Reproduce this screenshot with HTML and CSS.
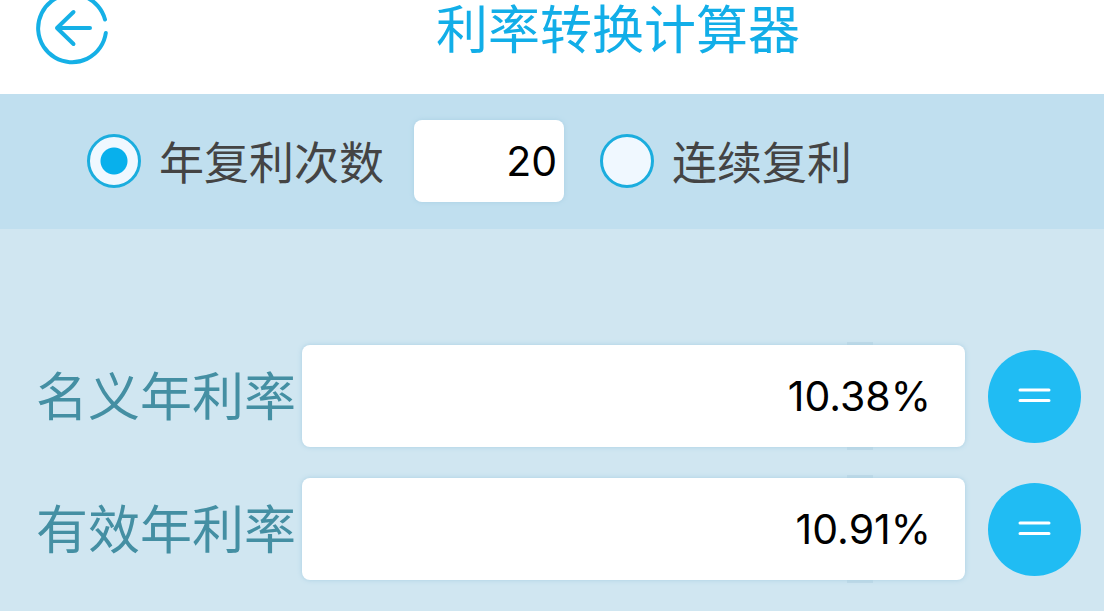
FILE: index.html
```html
<!DOCTYPE html>
<html lang="zh-CN">
<head>
	<meta charset="UTF-8">
	<meta name="viewport" content="width=device-width, initial-scale=1">
	<title>利率转换计算器</title>
	<link rel="stylesheet" href="styles.css">
</head>
<body>

	<header class="header">
		<button type="button" class="back" aria-label="返回">
			<svg width="76" height="66" viewBox="0 10 76 66" fill="none" stroke="#15b0e6" stroke-width="4" stroke-linecap="round" stroke-linejoin="round">
				<path d="M71 29.500A34 34 0 1 0 71.800 43"/>
				<path d="M56 38H23M39.500 22L23 38L39.500 54"/>
			</svg>
		</button>
		<h1 class="title">利率转换计算器</h1>
	</header>

	<form>
		<div class="options">
			<label class="option">
				<input type="radio" name="mode" class="radio" checked>
				<span>年复利次数</span>
			</label>
			<input type="text" class="box times" value="20" aria-label="年复利次数">
			<label class="option">
				<input type="radio" name="mode" class="radio">
				<span>连续复利</span>
			</label>
		</div>

		<div class="rates">
			<div class="row">
				<label for="nominal" class="name">名义年利率</label>
				<div class="field">
					<input type="text" id="nominal" class="box rate" value="10.38%">
				</div>
				<button type="button" class="equal" aria-label="计算名义年利率">
					<svg width="34" height="18" viewBox="0 0 34 18" stroke="#fff" stroke-width="3" stroke-linecap="round">
						<path d="M2 3H31M2 13.500H31"/>
					</svg>
				</button>
			</div>
			<div class="row">
				<label for="effective" class="name">有效年利率</label>
				<div class="field">
					<input type="text" id="effective" class="box rate" value="10.91%">
				</div>
				<button type="button" class="equal" aria-label="计算有效年利率">
					<svg width="34" height="18" viewBox="0 0 34 18" stroke="#fff" stroke-width="3" stroke-linecap="round">
						<path d="M2 3H31M2 13.500H31"/>
					</svg>
				</button>
			</div>
		</div>
	</form>

</body>
</html>
```
FILE: styles.css
```css
*{
	margin: 0;
	padding: 0;
	box-sizing: border-box;
}
body{
	min-height: 100vh;
	background: #d0e6f1;
	font-family: "Noto Sans CJK SC", sans-serif;
}
button{
	border: none;
	background: none;
	cursor: pointer;
}
svg{
	display: block;
}
.header{
	display: flex;
	align-items: flex-start;
	gap: 22px;
	padding: 0 0 28px 34px;
	background: #fff;
}
.title{
	flex: 1;
	font-size: 52px;
	font-weight: 400;
	line-height: 54px;
	text-align: center;
	color: #12aee8;
}
.options{
	display: flex;
	align-items: center;
	padding: 26px 24px 27px 87px;
	background: #c0dfef;
}
.option{
	display: flex;
	align-items: center;
	gap: 18px;
	font-size: 45px;
	line-height: 54px;
	white-space: nowrap;
	color: #444;
}
.radio{
	appearance: none;
	width: 54px;
	height: 54px;
	border: 3px solid #1badde;
	border-radius: 50%;
	background: #f0f8ff;
}
.radio:checked{
	background: radial-gradient(circle, #08b0ec 13px, #f0f8ff 14px);
}
.box{
	border: none;
	outline: none;
	border-radius: 8px;
	background: #fff;
	box-shadow: 0 0 5px #a9cfe3;
	font-family: Inter, sans-serif;
	font-size: 41px;
	text-align: right;
	color: #000;
}
.times{
	width: 150px;
	height: 82px;
	margin: 0 36px 0 30px;
	padding: 0 7px;
}
.rates{
	display: flex;
	flex-direction: column;
	gap: 31px;
	padding: 116px 23px 31px 36px;
}
.row{
	display: flex;
	align-items: center;
}
.name{
	margin-right: 6px;
	padding-bottom: 4px;
	font-size: 52px;
	line-height: 60px;
	white-space: nowrap;
	color: #448fa3;
}
.field{
	position: relative;
	flex: 1;
	margin-right: 23px;
}
/* darker mark showing above and below the box */
.field::before{
	content: "";
	position: absolute;
	top: -3px;
	bottom: -3px;
	right: 92px;
	width: 26px;
	background: #c0dae8;
}
.rate{
	position: relative;
	display: block;
	width: 100%;
	height: 102px;
	padding: 0 34px;
}
.equal{
	display: flex;
	align-items: center;
	justify-content: center;
	width: 93px;
	height: 93px;
	border-radius: 50%;
	background: #20bcf3;
}
```
